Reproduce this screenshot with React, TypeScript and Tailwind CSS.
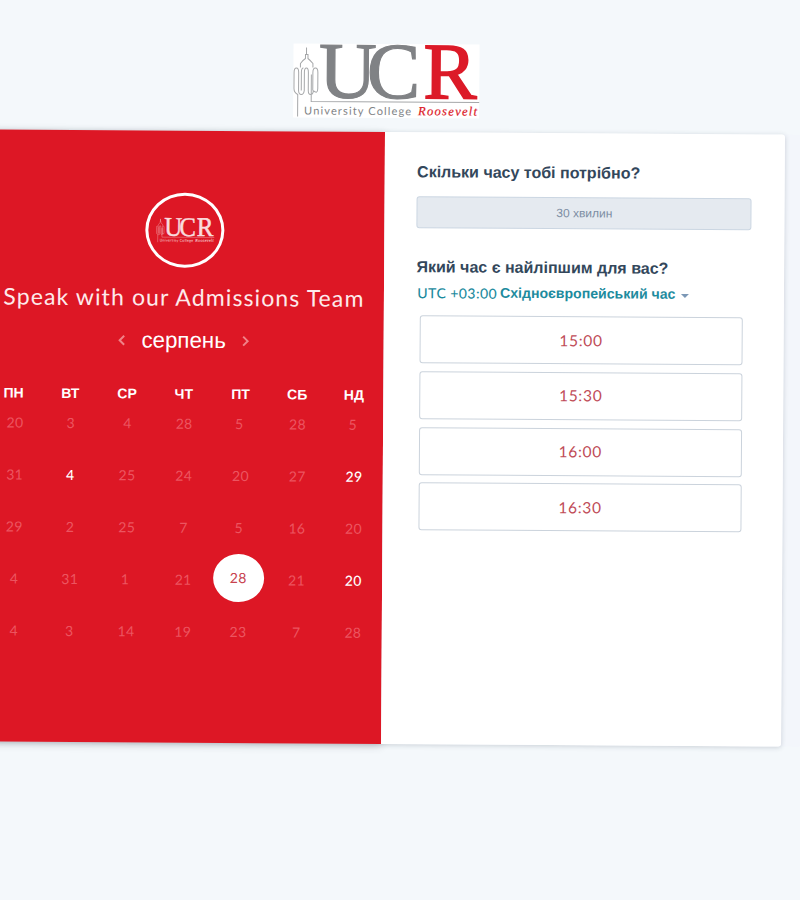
import React from "react";

type Day = { n: number; open?: boolean; selected?: boolean; shift?: string };

const weekdays = ["ПН", "ВТ", "СР", "ЧТ", "ПТ", "СБ", "НД"];

const weeks: Day[][] = [
  [{ n: 20, shift: "left" }, { n: 3 }, { n: 4 }, { n: 28 }, { n: 5, shift: "right" }, { n: 28 }, { n: 5, shift: "right" }],
  [{ n: 31, shift: "left" }, { n: 4, open: true }, { n: 25 }, { n: 24 }, { n: 20 }, { n: 27 }, { n: 29, open: true }],
  [{ n: 29, shift: "left" }, { n: 2 }, { n: 25 }, { n: 7 }, { n: 5, shift: "right" }, { n: 16 }, { n: 20 }],
  [{ n: 4, shift: "left" }, { n: 31 }, { n: 1, shift: "right" }, { n: 21 }, { n: 28, selected: true, shift: "right" }, { n: 21 }, { n: 20, open: true }],
  [{ n: 4, shift: "left" }, { n: 3 }, { n: 14 }, { n: 19 }, { n: 23, shift: "right" }, { n: 7 }, { n: 28 }],
];

const slots = ["15:00", "15:30", "16:00", "16:30"];

function Logo({ className, mono = false }: { className: string; mono?: boolean }) {
  const grey = mono ? "#ffffff" : "#808285";
  const red = mono ? "#ffffff" : "#dc1a28";
  return (
    <svg className={`overflow-visible ${className}`} viewBox="0 0 186 74" preserveAspectRatio="none">
      {!mono && <rect width="186" height="74" fill="#fff" />}
      <g fill="none" stroke={mono ? "#ffffff" : "#a5a7a9"} strokeWidth="1">
        <path d="M4.500 73V51Q.7 49 .7 45V29Q.7 24.500 3 24.500T5.300 29V47Q5.500 51 8 51T11 47V29Q11 24.500 13 24.500T15 29V47Q15 51 17.500 51T20 47M8 47V29Q8 24.500 10 24.500M18 31V58H186M20 47Q24.500 51 24.500 45V29Q24.500 24.500 22 24.500T19.500 29V47M7 24V20Q9 17 12 15V11H13V4V11H14.500V15Q17 17 19.500 20V24" />
      </g>
      <text x="25.5 73.5 130" y="54" fontFamily="'Liberation Serif', serif" fontSize="80" fill={grey} stroke={grey} strokeWidth="1.2">
        UC<tspan fill={red} stroke={red} strokeWidth="1.6">R</tspan>
      </text>
      <text x="11" y="71" fontFamily="Lato, sans-serif" fontSize="11" fill={grey} textLength="107">University College</text>
      <text x="125" y="71" fontFamily="'Liberation Serif', serif" fontStyle="italic" fontSize="12.500" fill={red} stroke={red} strokeWidth="0.2" textLength="59">Roosevelt</text>
    </svg>
  );
}

function Arrow({ next = false }: { next?: boolean }) {
  return (
    <svg className="mb-[1px] h-[12px] w-[8px]" viewBox="0 0 8 12" fill="none" stroke="#f08288" strokeWidth="2">
      <path d={next ? "M1.500 1.500 6 6 1.500 10.500" : "M6.500 1.500 2 6 6.500 10.500"} />
    </svg>
  );
}

function DayCell({ day }: { day: Day }) {
  const nudge = day.shift === "left" ? "pl-[2px]" : day.shift === "right" ? "pr-[3px]" : "";
  return (
    <div className={`flex h-[52px] items-center justify-center ${nudge}`}>
      {day.selected ? (
        <span className="flex h-[48px] w-[51px] shrink-0 items-center justify-center rounded-[50%] bg-white pb-[2px] text-[#c8434f]">
          {day.n}
        </span>
      ) : (
        <span className={`pt-[2px] ${day.open ? "font-medium text-white" : "text-[#ec5560]"}`}>{day.n}</span>
      )}
    </div>
  );
}

function CalendarPanel() {
  return (
    <section className="flex w-[400px] shrink-0 flex-col items-center bg-[#dd1725] pt-[62px] text-white shadow-[0_2px_8px_rgba(40,50,60,0.2)]">
      <div className="ml-[1px] flex h-[75px] w-[79px] items-center justify-center rounded-[50%] border-[3px] border-white">
        <Logo mono className="h-[25px] w-[58px] opacity-85" />
      </div>
      <h1 className="mt-[11px] h-[36px] whitespace-nowrap font-['Lato',sans-serif] text-[23px] leading-[36px] tracking-[1.12px] text-[#fdeaeb]">
        Speak with our Admissions Team
      </h1>
      <div className="mt-[8px] flex h-[36px] items-center gap-[16px]">
        <Arrow />
        <span className="font-['Liberation_Sans',sans-serif] text-[22.300px] leading-[36px]">серпень</span>
        <Arrow next />
      </div>
      <div className="ml-[1px] mt-[22.500px] grid w-[397px] grid-cols-7 text-center font-['Liberation_Sans',sans-serif] text-[14px] font-bold leading-[24px]">
        {weekdays.map((d) => (
          <span key={d}>{d}</span>
        ))}
      </div>
      <div className="ml-[2px] mt-[-9.500px] grid w-[397px] grid-cols-7 font-['Lato',sans-serif] text-[14px] tracking-[0.3px]">
        {weeks.flatMap((week, r) => week.map((day, c) => <DayCell key={`${r}-${c}`} day={day} />))}
      </div>
    </section>
  );
}

function TimePanel() {
  return (
    <section className="w-[400px] rounded-r-[3px] bg-white pl-[32.400px] pt-[28px] font-['Liberation_Sans',sans-serif]">
      <h2 className="h-[24px] text-[16px] font-bold leading-[24px] text-[#33475b]">Скільки часу тобі потрібно?</h2>
      <div className="mt-[12px] flex h-[32px] w-[335px] items-center justify-center rounded-[3px] border border-[#cbd6e2] bg-[#e5eaf0] text-[12px] text-[#7c8da3]">
        30 хвилин
      </div>
      <h2 className="mt-[27px] h-[24px] text-[16px] font-bold leading-[24px] text-[#33475b]">Який час є найліпшим для вас?</h2>
      <div className="ml-[1px] flex h-[26px] items-center whitespace-nowrap text-[14px] text-[#1d8b9e]">
        <span className="font-['Lato',sans-serif] font-medium tracking-[0.45px]">UTC +03:00</span>
        <span className="ml-[3px] text-[14.100px] font-bold">Східноєвропейський час</span>
        <span className="ml-[6px] mt-[3px] border-x-4 border-t-4 border-x-transparent border-t-[#7c98b6]" />
      </div>
      <div className="ml-[3.500px] mt-[10px] flex w-[323px] flex-col gap-[7.700px]">
        {slots.map((s) => (
          <button
            key={s}
            className="h-[48px] rounded-[3px] border border-[#cbd3dc] bg-white font-['Lato',sans-serif] text-[15.500px] tracking-[0.7px] text-[#c04c58]"
          >
            {s}
          </button>
        ))}
      </div>
    </section>
  );
}

export default function App() {
  return (
    <main className="h-[900px] w-[800px] overflow-hidden bg-[#f4f8fb]">
      <div className="w-[830px] origin-[385px_132px] rotate-[0.37deg]">
        <header className="flex h-[132.200px] pl-[292.500px] pt-[43.700px]">
          <Logo className="h-[74px] w-[186px]" />
        </header>
        <div className="ml-[-15px] w-[845px] bg-[#f3f6fb]">
          <div className="flex h-[612px] w-[800px] rounded-[3px] shadow-[0_1px_5px_rgba(45,62,80,0.22)]">
            <CalendarPanel />
            <TimePanel />
          </div>
        </div>
      </div>
    </main>
  );
}
